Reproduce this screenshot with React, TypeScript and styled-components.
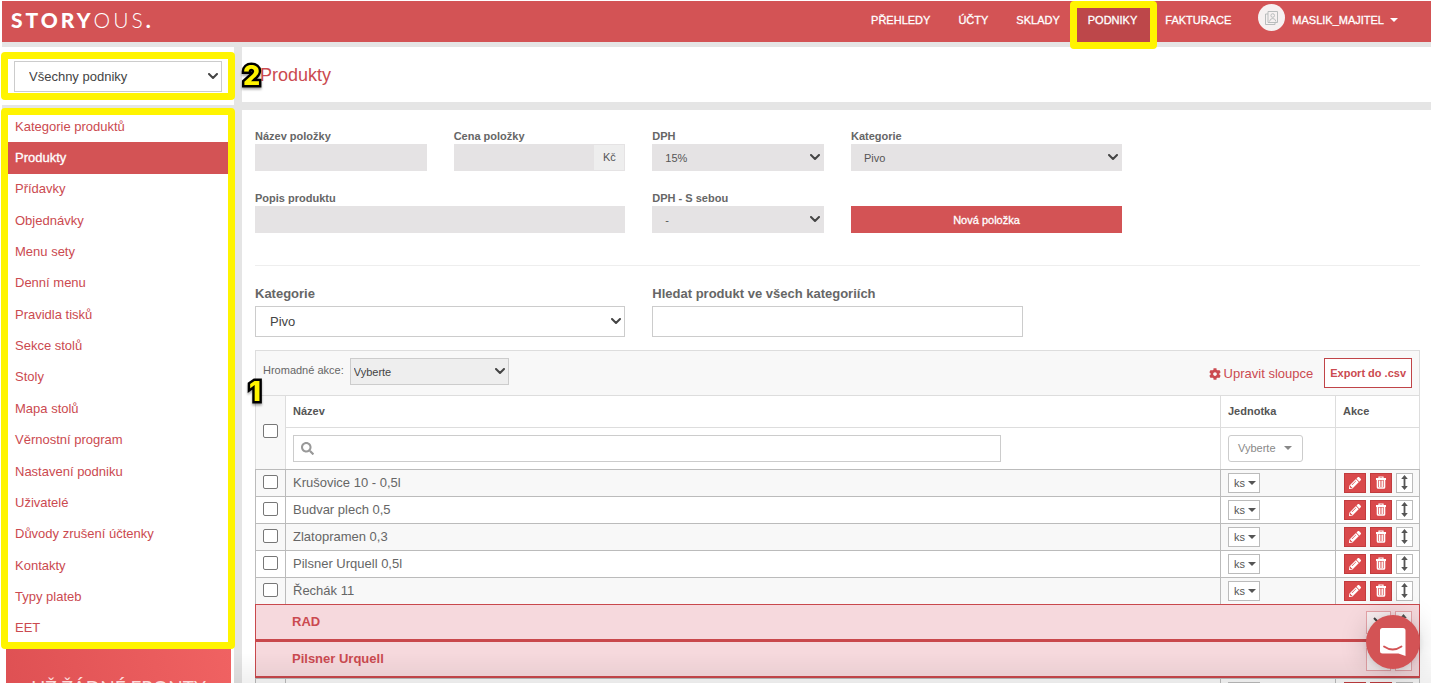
import React from 'react';
import styled, { createGlobalStyle, css } from 'styled-components';
import { FaCog, FaSearch, FaPencilAlt } from 'react-icons/fa';

const red = '#d35355';
const linkRed = '#cb4a50';
const grey = '#e5e5e5';
const yellow = '#fff400';

const GlobalStyle = createGlobalStyle`
  *, *::before, *::after { box-sizing: border-box; }
  body {
    margin: 0;
    background: #fff;
    color: #666;
    font: 13px/18px "Liberation Sans", Arial, sans-serif;
  }
  button, input, select { font-family: inherit; margin: 0; border-radius: 0; }
  a { text-decoration: none; }
`;

const Page = styled.div`
  height: 100vh;
  overflow: hidden;
  padding: 1px 0 0 2px;
  position: relative;
`;

/* ---------- header ---------- */

const Header = styled.header`
  display: flex;
  align-items: stretch;
  justify-content: space-between;
  height: 41px;
  padding: 0 33px 0 9px;
  background: ${red};
`;

const Logo = styled.a`
  color: #fff;
  font: 900 21px/38px Lato, sans-serif;
  letter-spacing: 3px;
  span { font-weight: 300; }
`;

const Nav = styled.nav`
  display: flex;
`;

const NavLink = styled.a<{ $active?: boolean }>`
  position: relative;
  padding: 0 14px;
  color: #fff;
  font-size: 11px;
  line-height: 38px;
  -webkit-text-stroke: 0.3px #fff;
  background: ${(p) => (p.$active ? '#bd474a' : 'transparent')};
`;

const UserMenu = styled.button`
  display: flex;
  align-items: center;
  gap: 6px;
  margin-left: 13px;
  padding: 0 0 3px;
  border: 0;
  background: none;
  color: #fff;
  font-size: 11px;
  -webkit-text-stroke: 0.3px #fff;
`;

const Avatar = styled.span`
  display: flex;
  align-items: center;
  justify-content: center;
  width: 27px;
  height: 27px;
  margin: 0 1px 5px 0;
  border-radius: 50%;
  background: #f6f1f1;
`;

const Caret = styled.span`
  width: 0;
  height: 0;
  border: 4px solid transparent;
  border-top-color: currentColor;
  border-bottom: 0;
`;

/* ---------- annotations ---------- */

const Marker = styled.span<{ $inset: string }>`
  position: absolute;
  inset: ${(p) => p.$inset};
  z-index: 2;
  border: 7px solid ${yellow};
  border-radius: 4px;
  pointer-events: none;
`;

const Digit = styled.span<{ $left: number; $top: number }>`
  position: absolute;
  left: ${(p) => p.$left}px;
  top: ${(p) => p.$top}px;
  z-index: 3;
  color: ${yellow};
  font: 800 27px/30px Inter, sans-serif;
  -webkit-text-stroke: 5px #000;
  paint-order: stroke fill;
  filter: drop-shadow(0 2px 1px rgba(0, 0, 0, 0.35));
`;

/* ---------- page frame ---------- */

const Body = styled.div`
  display: grid;
  grid-template-columns: 232px minmax(0, 1fr);
  gap: 8px;
  padding-top: 5px;
  background: ${grey};
`;

const Sidebar = styled.aside`
  display: flex;
  flex-direction: column;
  gap: 5px;
`;

const VenuePanel = styled.div`
  position: relative;
  padding: 14px 12px 13px;
  background: #fff;
`;

const MenuPanel = styled.div`
  flex: 1;
  background: #fff;
`;

const Menu = styled.ul`
  position: relative;
  display: grid;
  grid-auto-rows: 1fr;
  min-height: 539px;
  margin: 0;
  padding: 1px 0 5px;
  list-style: none;
`;

const MenuLink = styled.a<{ $active?: boolean }>`
  display: flex;
  align-items: center;
  height: 100%;
  padding: 0 13px;
  color: ${(p) => (p.$active ? '#fff' : linkRed)};
  background: ${(p) => (p.$active ? red : 'transparent')};
  ${(p) => p.$active && css`-webkit-text-stroke: 0.3px #fff;`}
`;

const Banner = styled.a`
  display: block;
  margin: 0 3px 0 4px;
  padding: 27px 0 60px;
  color: #fbdcdc;
  text-align: center;
  font: 400 19px/24px Lato, sans-serif;
  background: linear-gradient(75deg, #dd4f52, #f06262);
`;

const Main = styled.main`
  display: flex;
  flex-direction: column;
  gap: 8px;
`;

const TitleBar = styled.div`
  position: relative;
  padding: 16px 18px 15px;
  background: #fff;
`;

const Title = styled.h1`
  margin: 0;
  color: ${linkRed};
  font-size: 18px;
  line-height: 24px;
  font-weight: 400;
`;

const Content = styled.section`
  flex: 1;
  padding: 19px 11px 40px 13px;
  background: #fff;
`;

/* ---------- forms ---------- */

const Grid = styled.div`
  display: grid;
  grid-template-columns: repeat(12, minmax(0, 1fr));
  gap: 20px 27px;
`;

const Field = styled.div<{ $span: number; $start?: number }>`
  grid-column: ${(p) => (p.$start ? `${p.$start} / ` : '')}span ${(p) => p.$span};
  display: flex;
  flex-direction: column;
  justify-content: flex-end;
`;

const Label = styled.label<{ $large?: boolean }>`
  color: #666;
  font-weight: 700;
  font-size: ${(p) => (p.$large ? 13 : 11)}px;
  line-height: ${(p) => (p.$large ? 17 : 15)}px;
  margin-bottom: ${(p) => (p.$large ? 4 : 0)}px;
`;

type Look = 'filled' | 'outline' | 'compact';

const looks = {
  filled: css`
    height: 27px;
    padding: 0 13px;
    border: 0;
    background: #e5e3e4;
    color: #555;
    font-size: 11px;
  `,
  outline: css`
    height: 31px;
    padding: 0 14px;
    border: 1px solid #ccc;
    background: #fff;
    color: #444;
    font-size: 13px;
  `,
  compact: css`
    height: 27px;
    padding: 0 3px;
    border: 1px solid #ccc;
    background: #eee;
    color: #444;
    font-size: 11px;
  `,
};

const Input = styled.input<{ $look: Look }>`
  width: 100%;
  min-width: 0;
  outline: 0;
  ${(p) => looks[p.$look]}
`;

const SelectBox = styled.span`
  position: relative;
  display: block;
  svg {
    position: absolute;
    right: 4px;
    top: 50%;
    margin-top: -4px;
    pointer-events: none;
  }
`;

const NativeSelect = styled.select<{ $look: Look }>`
  display: block;
  width: 100%;
  appearance: none;
  outline: 0;
  ${(p) => looks[p.$look]}
`;

function Select({ id, look, value, label }: { id: string; look: Look; value: string; label?: string }) {
  return (
    <SelectBox>
      <NativeSelect id={id} $look={look} aria-label={label}>
        <option>{value}</option>
      </NativeSelect>
      <svg width="10" height="7" viewBox="0 0 10 7" fill="none" stroke="#444" strokeWidth="2">
        <path d="M1 1l4 4 4-4" strokeLinecap="round" strokeLinejoin="round" />
      </svg>
    </SelectBox>
  );
}

const InputGroup = styled.div`
  display: flex;
`;

const Addon = styled.span`
  flex: none;
  width: 32px;
  border: 1px solid #e5e3e4;
  background: #eee;
  color: #555;
  font-size: 11px;
  line-height: 25px;
  text-align: center;
`;

const PrimaryButton = styled.button`
  height: 27px;
  border: 0;
  background: ${red};
  color: #fff;
  font-size: 11px;
  -webkit-text-stroke: 0.3px #fff;
`;

const Divider = styled.hr`
  margin: 32px 0 19px;
  border: 0;
  border-top: 1px solid #eee;
`;

/* ---------- product table ---------- */

const TableArea = styled.div`
  position: relative;
  margin-top: 13px;
`;

const Toolbar = styled.div`
  display: flex;
  align-items: flex-start;
  height: 45px;
  padding: 7px 7px 0;
  border: 1px solid #ddd;
  border-bottom: 0;
  background: #f8f8f8;
`;

const BulkLabel = styled.label`
  margin-right: 6px;
  font-size: 11px;
  line-height: 25px;
`;

const BulkSelect = styled.div`
  width: 159px;
  margin-right: auto;
`;

const ColumnsLink = styled.a`
  display: flex;
  align-items: center;
  gap: 3px;
  height: 31px;
  margin-right: 11px;
  color: ${linkRed};
`;

const ExportButton = styled.button`
  height: 30px;
  padding: 0 5px;
  border: 1px solid #c04448;
  background: #fff;
  color: ${linkRed};
  font-size: 11px;
  font-weight: 700;
`;

const Table = styled.table`
  width: 100%;
  table-layout: fixed;
  border-spacing: 0;
`;

const cell = css`
  padding: 0 7px;
  border: 0 solid #bbb;
  border-width: 1px 0 0 1px;
  text-align: left;
  &:last-child { border-right-width: 1px; }
`;

const HeadCell = styled.th<{ $h: number; $shade?: boolean }>`
  ${cell}
  height: ${(p) => p.$h}px;
  border-color: #ddd;
  color: #555;
  font-size: 11px;
  line-height: 14px;
  padding-bottom: 1px;
  background: ${(p) => (p.$shade ? '#f8f8f8' : '#fff')};
`;

const Row = styled.tr<{ $odd: boolean }>`
  background: ${(p) => (p.$odd ? '#f8f8f8' : '#fff')};
`;

const Cell = styled.td`
  ${cell}
  height: 27px;
`;

const GroupCell = styled.td`
  height: 37px;
  padding: 0 7px 0 36px;
  border: 1px solid #c9484c;
  border-bottom-width: 2px;
  background: #f6d9dd;
  color: ${linkRed};
  font-weight: 700;
`;

const GroupLine = styled.div`
  display: flex;
  align-items: center;
  justify-content: space-between;
`;

const Checkbox = styled.input`
  display: block;
  appearance: none;
  width: 15px;
  height: 14px;
  margin: 0 0 2px;
  border: 1px solid #777;
  border-radius: 2px;
  background: #fff;
`;

const SearchBox = styled.div`
  display: flex;
  align-items: center;
  gap: 6px;
  width: 77%;
  height: 27px;
  padding-left: 7px;
  border: 1px solid #ccc;
  background: #fff;
  color: #999;
  input { flex: 1; border: 0; outline: 0; background: none; }
`;

const FilterButton = styled.button`
  display: flex;
  align-items: center;
  gap: 8px;
  height: 27px;
  padding: 0 10px 0 9px;
  border: 1px solid #ccc;
  border-radius: 3px;
  background: #fff;
  color: #888;
  font-size: 11px;
`;

const UnitButton = styled.button`
  display: flex;
  align-items: center;
  gap: 3px;
  height: 20px;
  width: 32px;
  padding: 0 5px;
  border: 1px solid #bbb;
  background: #fff;
  color: #555;
  font-size: 11px;
`;

const Actions = styled.div`
  display: flex;
  gap: 4px;
  padding-left: 1px;
`;

const ActionButton = styled.button<{ $plain?: boolean }>`
  display: flex;
  align-items: center;
  justify-content: center;
  flex: none;
  width: ${(p) => (p.$plain ? 17 : 22)}px;
  height: 20px;
  padding: 0 0 1px;
  border: 1px solid ${(p) => (p.$plain ? '#bbb' : '#c13c3e')};
  background: ${(p) => (p.$plain ? '#fff' : '#d9494b')};
  color: ${(p) => (p.$plain ? '#555' : '#fff')};
`;

const GroupButton = styled(ActionButton)<{ $wide?: boolean }>`
  width: ${(p) => (p.$wide ? 25 : 17)}px;
  height: 23px;
  align-items: flex-start;
  padding-top: 2px;
  border-color: #e5a3a8;
  background: #f8eef0;
`;

const ChatButton = styled.button`
  position: fixed;
  right: 11px;
  bottom: 14px;
  z-index: 5;
  display: flex;
  align-items: center;
  justify-content: center;
  width: 54px;
  height: 54px;
  padding: 0;
  border: 0;
  border-radius: 50%;
  background: ${red};
  box-shadow: 0 1px 6px rgba(0, 0, 0, 0.1), 0 2px 28px rgba(0, 0, 0, 0.18);
`;

const BottomShade = styled.div`
  position: fixed;
  left: 234px;
  right: 0;
  bottom: 0;
  z-index: 4;
  height: 30px;
  background: linear-gradient(to top, rgba(0, 0, 0, 0.06), transparent);
  pointer-events: none;
`;

const menuItems = [
  'Kategorie produktů', 'Produkty', 'Přídavky', 'Objednávky', 'Menu sety', 'Denní menu',
  'Pravidla tisků', 'Sekce stolů', 'Stoly', 'Mapa stolů', 'Věrnostní program',
  'Nastavení podniku', 'Uživatelé', 'Důvody zrušení účtenky', 'Kontakty', 'Typy plateb', 'EET',
];

const navItems = ['PŘEHLEDY', 'ÚČTY', 'SKLADY', 'PODNIKY', 'FAKTURACE'];

const products = ['Krušovice 10 - 0,5l', 'Budvar plech 0,5', 'Zlatopramen 0,3', 'Pilsner Urquell 0,5l', 'Řechák 11'];

const TrashIcon = () => (
  <svg width="12" height="13" viewBox="0 0 12 13" fill="none" stroke="currentColor">
    <path d="M1 3h10" strokeWidth="2" />
    <path d="M4 2.500V1h4v1.500" strokeWidth="1.200" />
    <path d="M2.500 4v7.200q0 .8.8.8h5.400q.8 0 .8-.8V4" strokeWidth="1.600" />
    <path d="M4.500 4.500v6.500M6.050 4.500v6.500M7.600 4.500v6.500" strokeWidth="1" />
  </svg>
);

const MoveIcon = () => (
  <svg width="7" height="15" viewBox="0 0 7 15" fill="currentColor">
    <path d="M3.500 0L6.800 4H4.400v7h2.400L3.500 15 .2 11h2.400V4H.2z" />
  </svg>
);

function ProductRow({ name, odd }: { name: string; odd: boolean }) {
  return (
    <Row $odd={odd}>
      <Cell><Checkbox type="checkbox" aria-label={name} /></Cell>
      <Cell>{name}</Cell>
      <Cell><UnitButton>ks<Caret /></UnitButton></Cell>
      <Cell>
        <Actions>
          <ActionButton aria-label="Upravit"><FaPencilAlt size={12} /></ActionButton>
          <ActionButton aria-label="Smazat"><TrashIcon /></ActionButton>
          <ActionButton $plain aria-label="Přesunout"><MoveIcon /></ActionButton>
        </Actions>
      </Cell>
    </Row>
  );
}

function GroupRow({ name }: { name: string }) {
  return (
    <tr>
      <GroupCell colSpan={4}>
        <GroupLine>
          {name}
          <Actions>
            <GroupButton $plain $wide aria-label="Rozbalit">
              <svg width="12" height="12" viewBox="0 0 12 12" fill="none" stroke="#444" strokeWidth="2">
                <path d="M1 4l5 5 5-5" />
              </svg>
            </GroupButton>
            <GroupButton $plain aria-label="Přesunout"><MoveIcon /></GroupButton>
          </Actions>
        </GroupLine>
      </GroupCell>
    </tr>
  );
}

export default function App() {
  return (
    <Page>
      <GlobalStyle />
      <Header>
        <Logo href="#">STORY<span>OUS</span>.</Logo>
        <Nav>
          {navItems.map((item) => (
            <NavLink key={item} href="#" $active={item === 'PODNIKY'}>
              {item}
              {item === 'PODNIKY' && <Marker $inset="0 -6px -7px -4px" />}
            </NavLink>
          ))}
          <UserMenu>
            <Avatar>
              <svg width="15" height="16" viewBox="0 0 15 16" fill="none" stroke="#b9bdbd">
                <path d="M4 1.5h9.5v11H4z" />
                <path d="M4 4H1.5v10.500h9.500v-2" />
                <circle cx="8.700" cy="5.500" r="1.800" />
                <path d="M5.500 11.500q.5-3 3.200-3t3.200 3" />
              </svg>
            </Avatar>
            MASLIK_MAJITEL
            <Caret />
          </UserMenu>
        </Nav>
      </Header>

      <Body>
        <Sidebar>
          <VenuePanel>
            <Select id="venue" look="outline" value="Všechny podniky" label="Podnik" />
            <Marker $inset="5px -1px" />
          </VenuePanel>
          <MenuPanel>
            <Menu>
              {menuItems.map((item) => (
                <li key={item}>
                  <MenuLink href="#" $active={item === 'Produkty'}>{item}</MenuLink>
                </li>
              ))}
              <Marker as="li" $inset="-2px -1px 0" />
            </Menu>
            <Banner href="#">UŽ ŽÁDNÉ FRONTY</Banner>
          </MenuPanel>
        </Sidebar>

        <Main>
          <TitleBar>
            <Title>Produkty</Title>
            <Digit $left={1} $top={14}>2</Digit>
          </TitleBar>

          <Content>
            <Grid>
              <Field $span={2}>
                <Label htmlFor="name">Název položky</Label>
                <Input id="name" $look="filled" />
              </Field>
              <Field $span={2}>
                <Label htmlFor="price">Cena položky</Label>
                <InputGroup>
                  <Input id="price" $look="filled" />
                  <Addon>Kč</Addon>
                </InputGroup>
              </Field>
              <Field $span={2}>
                <Label htmlFor="vat">DPH</Label>
                <Select id="vat" look="filled" value="15%" />
              </Field>
              <Field $span={3}>
                <Label htmlFor="category">Kategorie</Label>
                <Select id="category" look="filled" value="Pivo" />
              </Field>
              <Field $span={4} $start={1}>
                <Label htmlFor="description">Popis produktu</Label>
                <Input id="description" $look="filled" />
              </Field>
              <Field $span={2}>
                <Label htmlFor="vat-takeaway">DPH - S sebou</Label>
                <Select id="vat-takeaway" look="filled" value="-" />
              </Field>
              <Field $span={3}>
                <PrimaryButton>Nová položka</PrimaryButton>
              </Field>
            </Grid>

            <Divider />

            <Grid>
              <Field $span={4}>
                <Label $large htmlFor="filter-category">Kategorie</Label>
                <Select id="filter-category" look="outline" value="Pivo" />
              </Field>
              <Field $span={4}>
                <Label $large htmlFor="filter-search">Hledat produkt ve všech kategoriích</Label>
                <Input id="filter-search" $look="outline" />
              </Field>
            </Grid>

            <TableArea>
              <Digit $left={-6} $top={27}>1</Digit>
              <Toolbar>
                <BulkLabel htmlFor="bulk">Hromadné akce:</BulkLabel>
                <BulkSelect><Select id="bulk" look="compact" value="Vyberte" /></BulkSelect>
                <ColumnsLink href="#"><FaCog size={12} />Upravit sloupce</ColumnsLink>
                <ExportButton>Export do .csv</ExportButton>
              </Toolbar>
              <Table>
                <colgroup>
                  <col width="30" />
                  <col />
                  <col width="115" />
                  <col width="85" />
                </colgroup>
                <thead>
                  <tr>
                    <HeadCell $h={74} $shade rowSpan={2}><Checkbox type="checkbox" aria-label="Vybrat vše" /></HeadCell>
                    <HeadCell $h={32}>Název</HeadCell>
                    <HeadCell $h={32}>Jednotka</HeadCell>
                    <HeadCell $h={32}>Akce</HeadCell>
                  </tr>
                  <tr>
                    <HeadCell $h={42}>
                      <SearchBox>
                        <FaSearch size={13} />
                        <input aria-label="Hledat název" />
                      </SearchBox>
                    </HeadCell>
                    <HeadCell $h={42}><FilterButton>Vyberte<Caret /></FilterButton></HeadCell>
                    <HeadCell $h={42} />
                  </tr>
                </thead>
                <tbody>
                  {products.map((name, i) => (
                    <ProductRow key={name} name={name} odd={i % 2 === 0} />
                  ))}
                  <GroupRow name="RAD" />
                  <GroupRow name="Pilsner Urquell" />
                  <ProductRow name="" odd />
                </tbody>
              </Table>
            </TableArea>
          </Content>
        </Main>
      </Body>

      <BottomShade />
      <ChatButton aria-label="Chat">
        <svg width="28" height="30" viewBox="0 0 28 30">
          <path d="M3.500 1h20.500q2.500 0 2.500 2.500V29l-7-2.500h-16Q1 26.500 1 24V3.500Q1 1 3.500 1z" fill="#fff" />
          <path d="M5 19.500q8.700 6 17.500 0" fill="none" stroke={red} strokeWidth="1.800" strokeLinecap="round" />
        </svg>
      </ChatButton>
    </Page>
  );
}
